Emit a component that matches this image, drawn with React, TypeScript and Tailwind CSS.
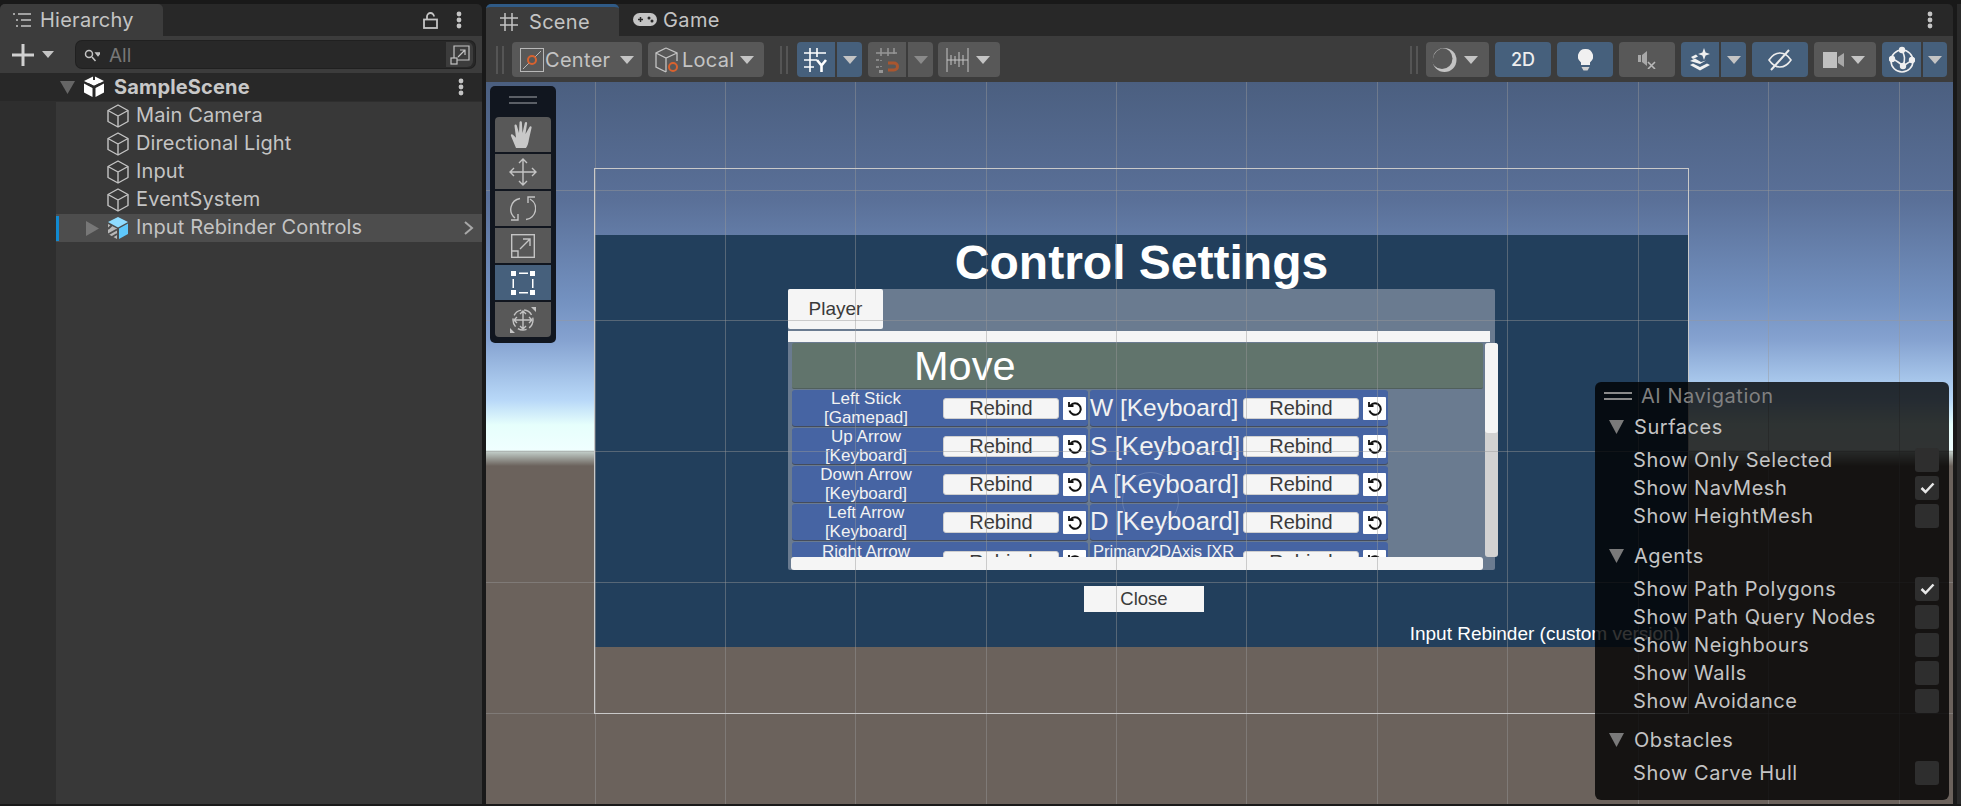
import React from "react";

const FONT = "font-['Inter','Noto_Sans',sans-serif]";
const GAME_FONT = "font-['Liberation_Sans',Arial,sans-serif]";

const hierarchy = ["Main Camera", "Directional Light", "Input", "EventSystem"];

const bindings = [
  { left: ["Left Stick", "[Gamepad]"], right: "W [Keyboard]", size: "text-[24.5px]" },
  { left: ["Up Arrow", "[Keyboard]"], right: "S [Keyboard]", size: "text-[26px]" },
  { left: ["Down Arrow", "[Keyboard]"], right: "A [Keyboard]", size: "text-[26px]" },
  { left: ["Left Arrow", "[Keyboard]"], right: "D [Keyboard]", size: "text-[25.7px]" },
];

// scene grid, in page pixels
const gridX = [595, 725, 855, 986, 1116, 1246, 1377, 1507, 1638, 1768, 1899];
const gridY = [190, 320, 451, 582, 713];

function Caret({ className = "", w = 14, h = 8 }: { className?: string; w?: number; h?: number }) {
  return (
    <svg width={w} height={h} viewBox="0 0 14 9" preserveAspectRatio="none" className={`shrink-0 ${className}`}>
      <path d="M0 0h14L7 9z" fill="currentColor" />
    </svg>
  );
}

function Kebab() {
  return (
    <svg width="6" height="18" viewBox="0 0 6 18" className="text-[#c4c4c4]">
      <circle cx="3" cy="3" r="2.4" fill="currentColor" />
      <circle cx="3" cy="9" r="2.4" fill="currentColor" />
      <circle cx="3" cy="15" r="2.4" fill="currentColor" />
    </svg>
  );
}

function Cube() {
  return (
    <svg width="22" height="24" viewBox="0 0 22 24" fill="none" stroke="#c4c4c4" strokeWidth="1.4" strokeLinejoin="round">
      <path d="M11 1 21 6.5V17.5L11 23 1 17.5V6.5Z" />
      <path d="M1 6.5 11 12 21 6.5M11 12V23" />
    </svg>
  );
}

function SceneIcon() {
  return (
    <svg width="22" height="24" viewBox="0 0 22 24">
      <path d="M11 1 21 6 11 11 1 6Z" fill="#fff" />
      <path d="M1 8.5 9.5 13V22L1 17.5ZM21 8.5 12.5 13V22L21 17.5Z" fill="#fff" />
      <path d="M11 0v5M5 9l6 3 6-3" stroke="#2c2c2c" strokeWidth="2" fill="none" />
    </svg>
  );
}

function PrefabIcon() {
  return (
    <svg width="22" height="24" viewBox="0 0 22 24">
      <path d="M11 1 21 6 11 11.5 1 6Z" fill="#8fdcff" />
      <path d="M12 12.5 21 7.5V18L12 23Z" fill="#5fc8fb" />
      <path d="M1 8 10 12.5V23L1 18Z" fill="#b8b8b8" />
      <path d="M1 13 5 9M1 18.5 10 13.5M5 21 10 18" stroke="#4d4d4d" strokeWidth="2" />
    </svg>
  );
}

function ToolbarButton({ children, active = false, className = "" }: { children: React.ReactNode; active?: boolean; className?: string }) {
  return (
    <div className={`flex h-[35px] items-center rounded-[4px] ${active ? "bg-[#46607c]" : "bg-[#585858]"} ${className}`}>
      {children}
    </div>
  );
}

function Split({ children, width = 38, menu = 25, active = false, dim = false }: { children: React.ReactNode; width?: number; menu?: number; active?: boolean; dim?: boolean }) {
  return (
    <div className={`flex h-[35px] gap-[2px] ${dim ? "text-[#8a8a8a]" : "text-[#c4c4c4]"}`}>
      <div
        className={`flex items-center justify-center rounded-l-[4px] ${active ? "bg-[#46607c]" : "bg-[#585858]"}`}
        style={{ width }}
      >
        {children}
      </div>
      <div
        className={`flex items-center justify-center rounded-r-[4px] ${active ? "bg-[#46607c]" : "bg-[#585858]"}`}
        style={{ width: menu }}
      >
        <Caret />
      </div>
    </div>
  );
}

function Grip() {
  return (
    <div className="flex h-[28px] gap-[4px]">
      <div className="w-[2px] bg-[#555]" />
      <div className="w-[2px] bg-[#555]" />
    </div>
  );
}

function TopToolbar() {
  return (
    <div className="flex h-[46px] shrink-0 items-center bg-[#3c3c3c] pb-[5px] pt-[6px]">
      <div className="ml-[10px]"><Grip /></div>
      <ToolbarButton className="ml-[8px] w-[130px] pl-[8px] text-[#c4c4c4]">
        <svg width="24" height="24" viewBox="0 0 24 24" fill="none">
          <rect x="0.5" y="0.5" width="23" height="23" stroke="#b8b8b8" />
          <path d="M3 21 21 3" stroke="#b8b8b8" />
          <circle cx="12" cy="12" r="4" stroke="#d8622f" strokeWidth="2" fill="#585858" />
        </svg>
        <span className="ml-[1px] text-[20px] tracking-[0.3px]">Center</span>
        <Caret className="ml-[10px]" />
      </ToolbarButton>
      <ToolbarButton className="ml-[6px] w-[116px] pl-[7px] text-[#c4c4c4]">
        <svg width="24" height="26" viewBox="0 0 24 26" fill="none" stroke="#c4c4c4" strokeWidth="1.3">
          <path d="M11 1 22 6V14M11 1 1 6V20L11 25M1 6 11 11 22 6M11 11V25" />
          <circle cx="18" cy="20" r="4" stroke="#d8622f" strokeWidth="2" />
        </svg>
        <span className="ml-[3px] text-[20px] tracking-[0.25px]">Local</span>
        <Caret className="ml-[6px]" />
      </ToolbarButton>
      <div className="ml-[16px]"><Grip /></div>
      <div className="ml-[9px]">
        <Split active>
          <svg width="24" height="26" viewBox="0 0 24 26" fill="none" stroke="#fff" strokeWidth="1.6">
            <path d="M6 1v24M13 1v9M0 6h22M0 13h13M0 20h10" />
            <path d="M13 13l4.5 5.5 4.500-5.500M17.5 18v7" strokeWidth="2.6" />
          </svg>
        </Split>
      </div>
      <div className="ml-[6px]">
        <Split dim>
          <svg width="24" height="26" viewBox="0 0 24 26" fill="none" stroke="#969696" strokeWidth="1.5">
            <path d="M6 1v8M13 1v8M19 1v6M1 6h21M6 13v1M1 13h3M6 19v1M1 20h3" />
            <rect x="4" y="23" width="4" height="3" fill="#969696" stroke="none" />
            <path d="M13 16h6a3.5 3.5 0 0 1 0 7h-6" stroke="#a9562f" strokeWidth="3" />
          </svg>
        </Split>
      </div>
      <ToolbarButton className="ml-[5px] w-[62px] pl-[8px] text-[#c4c4c4]">
        <svg width="23" height="26" viewBox="0 0 23 26" fill="none" stroke="#c4c4c4" strokeWidth="1">
          <path d="M1 1v24M22 1v24M1 13h21M5 8v10M9 9v8M13 5v15M17 8v10" />
        </svg>
        <Caret className="ml-[7px]" />
      </ToolbarButton>

      <div className="ml-auto mr-[6px] flex items-center">
        <Grip />
        <ToolbarButton className="ml-[8px] w-[63px] pl-[6px] text-[#c4c4c4]">
          <svg width="25" height="26" viewBox="0 0 25 26">
            <circle cx="12.5" cy="13" r="12" fill="#c4c4c4" />
            <circle cx="10" cy="11.5" r="10.5" fill="#585858" />
            <path d="M12.5 1A12 12 0 0 0 1 12 11 11 0 0 1 12.5 1Z" fill="#c4c4c4" />
          </svg>
          <Caret className="ml-[7px]" />
        </ToolbarButton>
        <ToolbarButton active className="ml-[6px] w-[56px] justify-center text-[18px] font-medium text-[#eee]">2D</ToolbarButton>
        <ToolbarButton active className="ml-[6px] w-[56px] justify-center">
          <svg width="15" height="22" viewBox="0 0 15 22">
            <path d="M7.5 0a7.4 7.4 0 0 1 4.5 13.4V16H3v-2.600A7.4 7.4 0 0 1 7.5 0Z" fill="#f0f0f0" />
            <path d="M3.5 18h8l-2 3.5h-4Z" fill="#d0d0d0" />
          </svg>
        </ToolbarButton>
        <ToolbarButton className="ml-[6px] w-[56px] justify-center">
          <svg width="20" height="18" viewBox="0 0 20 18" fill="none">
            <path d="M1 4h3v7H1ZM5 4l5-4v15l-5-4Z" fill="#a8a8a8" />
            <path d="M11 11l7 7M18 11l-7 7" stroke="#b8b8b8" strokeWidth="1.6" />
          </svg>
        </ToolbarButton>
        <div className="ml-[6px]">
          <Split active>
            <svg width="22" height="24" viewBox="0 0 22 24" fill="#f0f0f0">
              <path d="M15 0l1.6 4.4L21 6l-4.4 1.6L15 12l-1.6-4.400L9 6l4.4-1.600Z" />
              <path d="M2 9l5-2.500 2 2-5 2.500Z" />
              <path d="M1 13l5-2.500 6 3.500 5-1.500-6 3.500Z" />
              <path d="M1 17l3-1.500 7 3.500 7-3.500 3 1.500-10 5.500Z" />
            </svg>
          </Split>
        </div>
        <ToolbarButton active className="ml-[6px] w-[56px] justify-center">
          <svg width="24" height="22" viewBox="0 0 24 22" fill="none" stroke="#ececec" strokeWidth="1.6">
            <path d="M1 11c4-6 7-7 11-7s7 1 11 7c-4 6-7 7-11 7s-7-1-11-7Z" />
            <path d="M3 21 21 1" strokeWidth="2" />
          </svg>
        </ToolbarButton>
        <ToolbarButton className="ml-[6px] w-[62px] pl-[9px] text-[#c4c4c4]">
          <svg width="21" height="16" viewBox="0 0 21 16">
            <rect width="14" height="16" fill="#c0c0c0" />
            <path d="M15 5l6-4v14l-6-4Z" fill="#a8a8a8" />
          </svg>
          <Caret className="ml-[7px]" />
        </ToolbarButton>
        <div className="ml-[6px]">
          <Split width={39} menu={24} active>
            <svg width="26" height="28" viewBox="0 0 26 28" fill="none" stroke="#f0f0f0" strokeWidth="1.6">
              <circle cx="13" cy="15" r="11" />
              <path d="M3 12c5 4 9 5 10 8M13 4c2 5 4 8 1 16M14 20c4-2 7-5 10-6" />
              <circle cx="13" cy="4" r="2.4" fill="#f0f0f0" />
              <circle cx="3" cy="13" r="2.4" fill="#f0f0f0" />
              <circle cx="14" cy="20" r="2.4" fill="#f0f0f0" />
              <circle cx="23" cy="14" r="2.4" fill="#f0f0f0" />
            </svg>
          </Split>
        </div>
      </div>
    </div>
  );
}

function Tools() {
  const stroke = { fill: "none", stroke: "#c4c4c4", strokeWidth: 1.4 };
  const icons = [
    <svg key="hand" width="26" height="28" viewBox="0 0 26 28" fill="#c8c8c8">
      <path d="M6 27 1 15c-.6-1.4 1-2.4 2-1.2l3 3L4.5 5c-.2-1.6 2-1.9 2.3-.4L9 12l.5-10.500c.1-1.600 2.300-1.600 2.400 0L12.500 12l2.300-10c.4-1.500 2.500-1.100 2.300.4L15.500 13l4-7c.8-1.300 2.600-.4 2 1L19 18c-.5 4-1.500 7-3 9Z" />
    </svg>,
    <svg key="move" width="28" height="28" viewBox="0 0 28 28" {...stroke}>
      <path d="M14 1v26M1 14h26M10 5l4-4 4 4M10 23l4 4 4-4M5 10l-4 4 4 4M23 10l4 4-4 4" />
    </svg>,
    <svg key="rotate" width="26" height="26" viewBox="0 0 26 26" {...stroke}>
      <path d="M10 2.5A11 11 0 0 0 5 22M16 23.5A11 11 0 0 0 20 3M1 24h7v-6M25 1h-7v6" />
    </svg>,
    <svg key="scale" width="24" height="24" viewBox="0 0 24 24" {...stroke}>
      <rect x="0.7" y="0.7" width="22.6" height="22.6" />
      <path d="M1 17h6v6M9 15 19 5M12 5h7v7" />
    </svg>,
    <svg key="rect" width="24" height="24" viewBox="0 0 24 24" fill="#fff">
      <rect width="5" height="5" />
      <rect x="19" width="5" height="5" />
      <rect y="19" width="5" height="5" />
      <rect x="19" y="19" width="5" height="5" />
      <rect x="8" y="1.5" width="9" height="1.5" />
      <rect x="8" y="21" width="9" height="1.5" />
      <rect x="1.5" y="8" width="1.5" height="9" />
      <rect x="21" y="8" width="1.5" height="9" />
    </svg>,
    <svg key="transform" width="28" height="28" viewBox="0 0 28 28" {...stroke}>
      <circle cx="14" cy="14" r="10" strokeDasharray="9 3" />
      <path d="M14 5v18M5 14h18M11 8l3-3 3 3M11 20l3 3 3-3M8 11l-3 3 3 3M20 11l3 3-3 3" />
      <path d="M22 1h5v5ZM1 27v-5l5 5Z" fill="#c4c4c4" stroke="none" />
    </svg>,
  ];
  return (
    <div className="absolute left-[4px] top-[4px] flex w-[66px] flex-col gap-[2px] rounded-[5px] bg-[#11161f] px-[5px] pb-[6px] pt-[10px]">
      <div className="mb-[11px] flex flex-col items-center gap-[4px]">
        <div className="h-[2px] w-[28px] bg-[#5b5f66]" />
        <div className="h-[2px] w-[28px] bg-[#5b5f66]" />
      </div>
      {icons.map((icon, i) => (
        <div
          key={i}
          className={`flex h-[35px] items-center justify-center ${i === 4 ? "bg-[#46607c]" : "bg-[#585858]"} ${i === 0 ? "rounded-t-[4px]" : ""} ${i === 5 ? "rounded-b-[4px]" : ""}`}
        >
          {icon}
        </div>
      ))}
    </div>
  );
}

function ResetIcon() {
  return (
    <div className="flex h-[23px] w-[23px] shrink-0 items-center justify-center rounded-[1px] bg-white">
      <svg width="15" height="15" viewBox="0 0 15 15" fill="none" stroke="#111" strokeWidth="2">
        <path d="M3.5 4.5A5.7 5.7 0 1 1 2.5 9.5" />
        <path d="M2 1v4h4.5" strokeWidth="1.8" />
      </svg>
    </div>
  );
}

function RebindButton() {
  return (
    <div className="flex h-[21px] w-[116px] shrink-0 items-center justify-center rounded-[3px] border border-[#cfcfcf] bg-[#f5f5f5] text-[20px] text-[#3a3a3a]">
      Rebind
    </div>
  );
}

function BindingRow({ left, right, size }: { left: string[]; right: string; size: string }) {
  return (
    <div className="mb-[2px] flex h-[36px] shrink-0 gap-[2px]">
      <div className="flex h-[36px] w-[296px] items-center rounded-[3px] bg-[#4664a3] shadow-[0_1px_0_#444c5c]">
        <div className="mr-[3px] flex w-[148px] shrink-0 flex-col items-center text-[17px] leading-[19px] text-[#f2f2f2]">
          <span>{left[0]}</span>
          <span>{left[1]}</span>
        </div>
        <RebindButton />
        <div className="ml-[4px]"><ResetIcon /></div>
      </div>
      <div className="flex h-[36px] w-[298px] items-center rounded-[3px] bg-[#4664a3] shadow-[0_1px_0_#444c5c]">
        <span className={`w-[153px] shrink-0 whitespace-nowrap leading-none text-[#f2f2f2] ${size}`}>{right}</span>
        <RebindButton />
        <div className="ml-[4px]"><ResetIcon /></div>
      </div>
    </div>
  );
}

function SettingsCanvas() {
  return (
    <div className={`absolute left-[109px] top-[153px] flex h-[412px] w-[1093px] flex-col items-center bg-[#223f5c] ${GAME_FONT}`}>
      <h1 className="text-[48px] font-bold leading-[55px] text-white">Control Settings</h1>
      <div className="relative mt-[-1px] flex h-[281px] w-[707px] flex-col rounded-[2px] bg-[#6a7b90]">
        <div className="flex h-[40px] w-[95px] shrink-0 items-center justify-center rounded-[2px] bg-[#f5f5f5] text-[19px] text-[#3a3a3a]">
          Player
        </div>
        <div className="mt-[2px] h-[11px] w-[702px] shrink-0 bg-[#f5f5f5]" />
        <div className="ml-[4px] mt-[1px] flex h-[214px] w-[691px] shrink-0 flex-col overflow-hidden">
          <div className="mb-[1px] flex h-[46px] shrink-0 items-center rounded-[2px] border-b border-[#505f5c] bg-[#61746c] pl-[122px] text-[41.5px] leading-none text-white">
            Move
          </div>
          {bindings.map((b) => (
            <BindingRow key={b.right} left={b.left} right={b.right} size={b.size} />
          ))}
          <div className="flex h-[36px] shrink-0 gap-[2px]">
            <div className="flex h-[36px] w-[296px] items-start rounded-[3px] bg-[#4664a3]">
              <div className="mr-[3px] flex w-[148px] shrink-0 flex-col items-center text-[17px] leading-[19px] text-[#f2f2f2]">
                <span>Right Arrow</span>
              </div>
              <div className="mt-[9px]"><RebindButton /></div>
              <div className="ml-[4px] mt-[8px]"><ResetIcon /></div>
            </div>
            <div className="flex h-[36px] w-[298px] items-start rounded-[3px] bg-[#4664a3]">
              <span className="w-[153px] shrink-0 whitespace-nowrap pl-[3px] text-[16.5px] leading-[19px] text-[#f2f2f2]">Primary2DAxis [XR</span>
              <div className="mt-[9px]"><RebindButton /></div>
              <div className="ml-[4px] mt-[8px]"><ResetIcon /></div>
            </div>
          </div>
        </div>
        <div className="ml-[3px] h-[13px] w-[692px] shrink-0 rounded-[3px] bg-[#f5f5f5]" />
        <div className="absolute left-[697px] top-[54px] flex h-[214px] w-[13px] flex-col rounded-[3px] bg-[#d2d2d2]">
          <div className="h-[90px] rounded-[3px] bg-[#f5f5f5]" />
        </div>
      </div>
      <div className="ml-[5px] mt-[16px] flex h-[26px] w-[120px] items-center justify-center bg-[#f5f5f5] text-[18.5px] text-[#3a3a3a]">
        Close
      </div>
      <div className="absolute right-[8px] top-[388px] whitespace-nowrap text-[19px] leading-[22px] text-white">Input Rebinder (custom version)</div>
    </div>
  );
}

function NavRow({ label, checked = false }: { label: string; checked?: boolean }) {
  return (
    <div className="flex h-[28px] items-center justify-between pl-[38px] pr-[10px]">
      <span className="text-[20px] tracking-[0.55px] text-[#c4c4c4]">{label}</span>
      <div className="flex h-[24px] w-[24px] items-center justify-center rounded-[3px] bg-[#2e2e2e]">
        {checked && (
          <svg width="15" height="12" viewBox="0 0 15 12" fill="none" stroke="#e8e8e8" strokeWidth="2.5">
            <path d="M1.5 6 5.5 10 13.5 1.5" />
          </svg>
        )}
      </div>
    </div>
  );
}

function NavHeader({ label }: { label: string }) {
  return (
    <div className="flex h-[28px] items-center gap-[10px] pl-[14px]">
      <Caret className="text-[#7a7a7a]" w={15} h={14} />
      <span className="text-[20px] tracking-[0.55px] text-[#c4c4c4]">{label}</span>
    </div>
  );
}

function AINavigation() {
  return (
    <div className={`absolute left-[1109px] top-[300px] flex h-[418px] w-[354px] flex-col rounded-[6px] bg-black/80 ${FONT}`}>
      <div className="flex h-[28px] shrink-0 items-center gap-[9px] pl-[9px]">
        <div className="flex flex-col gap-[4.5px]">
          <div className="h-[1.5px] w-[28px] bg-[#8a8a8a]" />
          <div className="h-[1.5px] w-[28px] bg-[#8a8a8a]" />
        </div>
        <span className="text-[20px] tracking-[0.55px] text-[#808080]">AI Navigation</span>
      </div>
      <div className="mt-[3px]"><NavHeader label="Surfaces" /></div>
      <div className="mt-[5px]">
        <NavRow label="Show Only Selected" />
        <NavRow label="Show NavMesh" checked />
        <NavRow label="Show HeightMesh" />
      </div>
      <div className="mt-[12px]"><NavHeader label="Agents" /></div>
      <div className="mt-[5px]">
        <NavRow label="Show Path Polygons" checked />
        <NavRow label="Show Path Query Nodes" />
        <NavRow label="Show Neighbours" />
        <NavRow label="Show Walls" />
        <NavRow label="Show Avoidance" />
      </div>
      <div className="mt-[11px]"><NavHeader label="Obstacles" /></div>
      <div className="mt-[5px]">
        <NavRow label="Show Carve Hull" />
      </div>
    </div>
  );
}

function SceneView() {
  return (
    <div className="relative flex-1 overflow-hidden bg-[linear-gradient(180deg,#4b5f80_0px,#5a7098_118px,#7391c0_218px,#85a2d0_258px,#b8d8f8_318px,#e6fffc_343px,#f0ffff_368px,#c5d2cd_369px,#6b625c_384px,#6b625c_100%)]">
      <SettingsCanvas />
      {gridX.map((x) => (
        <div key={x} className="absolute bottom-0 top-0 w-px bg-[#9a9a9a]/45" style={{ left: x - 486 }} />
      ))}
      {gridY.map((y) => (
        <div key={y} className="absolute left-0 right-0 h-px bg-[#9a9a9a]/45" style={{ top: y - 82 }} />
      ))}
      <div className="absolute left-[636px] top-[390px] h-[57px] w-[57px] rounded-full border border-white/15" />
      <div className="absolute left-[108px] top-[86px] h-[546px] w-[1095px] border border-[#c9c9c9]" />
      <Tools />
      <AINavigation />
    </div>
  );
}

export default function App() {
  return (
    <div className={`flex h-[806px] w-[1961px] overflow-hidden bg-[#191919] pb-[2px] pt-[4px] ${FONT}`}>
      <div className="flex h-full w-[482px] shrink-0 flex-col rounded-t-[5px] bg-[#282828]">
        <div className="flex h-[32px] shrink-0 items-center justify-between">
          <div className="flex h-full w-[163px] items-center gap-[9px] rounded-t-[5px] bg-[#3c3c3c] pl-[13px]">
            <svg width="18" height="14" viewBox="0 0 18 14" stroke="#c4c4c4" strokeWidth="1.5" fill="none">
              <path d="M0 1h2M5 1h13M3 7h2M8 7h10M3 13h2M8 13h10" />
            </svg>
            <span className="text-[20px] tracking-[0.25px] text-[#c4c4c4]">Hierarchy</span>
          </div>
          <div className="flex items-center gap-[18px] pr-[20px]">
            <svg width="15" height="17" viewBox="0 0 15 17" fill="none" stroke="#c4c4c4" strokeWidth="1.8">
              <rect x="1" y="7.5" width="13" height="8.5" />
              <path d="M4 7.5V4.5a3.5 3.5 0 0 1 7 0" />
            </svg>
            <Kebab />
          </div>
        </div>
        <div className="flex h-[37px] shrink-0 items-center bg-[#3c3c3c]">
          <svg width="22" height="22" viewBox="0 0 22 22" className="ml-[12px]" stroke="#d0d0d0" strokeWidth="3">
            <path d="M11 0v22M0 11h22" />
          </svg>
          <Caret className="ml-[8px] text-[#c4c4c4]" w={12} h={7} />
          <div className="ml-[22px] flex h-[27px] w-[399px] items-center rounded-[6px] bg-[#282828] pl-[8px] ring-1 ring-[#202020]">
            <svg width="16" height="14" viewBox="0 0 16 14" fill="none" stroke="#c4c4c4" strokeWidth="1.5" className="mt-[2px]">
              <circle cx="5" cy="5" r="3.5" />
              <path d="M8 8l3.5 4M12 4h4l-2 2.5z" />
            </svg>
            <span className="ml-[9px] mt-[3px] text-[19px] leading-[24px] text-[#777]">All</span>
            <div className="ml-auto mr-[2px] flex h-[25px] w-[27px] items-center justify-center rounded-r-[6px] bg-[#3c3c3c]">
              <svg width="20" height="20" viewBox="0 0 20 20" fill="none" stroke="#c4c4c4" strokeWidth="1.2">
                <path d="M4 13V1h15v14H7" />
                <rect x="1" y="13" width="6" height="6" />
                <path d="M8 12l7-7M10 5h5v5" />
              </svg>
            </div>
          </div>
        </div>
        <div className="flex h-[29px] shrink-0 items-center border-b border-[#2e2e2e] bg-[#282828]">
          <Caret className="ml-[60px] text-[#666]" w={15} h={13} />
          <div className="ml-[8px]"><SceneIcon /></div>
          <span className="ml-[9px] text-[20px] font-bold tracking-[0.15px] text-[#c8c8c8]">SampleScene</span>
          <div className="ml-auto mr-[18px]"><Kebab /></div>
        </div>
        <div className="flex flex-1 bg-[#383838]">
          <div className="w-[56px] shrink-0 bg-[#2e2e2e]" />
          <div className="flex-1">
            {hierarchy.map((name) => (
              <div key={name} className="flex h-[28px] items-center pl-[51px]">
                <Cube />
                <span className="mb-[2px] ml-[7px] text-[20px] tracking-[0.13px] text-[#c4c4c4]">{name}</span>
              </div>
            ))}
            <div className="flex h-[28px] items-center bg-[#4d4d4d]">
              <div className="h-[25px] w-[3px] bg-[#1189d0]" />
              <svg width="13" height="15" viewBox="0 0 14 16" className="ml-[27px]">
                <path d="M0 0l14 8-14 8z" fill="#777" />
              </svg>
              <div className="ml-[8px]"><PrefabIcon /></div>
              <span className="mb-[2px] ml-[7px] text-[20px] tracking-[0.13px] text-[#c4c4c4]">Input Rebinder Controls</span>
              <svg width="10" height="14" viewBox="0 0 10 14" className="ml-auto mr-[8px]" fill="none" stroke="#a8a8a8" strokeWidth="2">
                <path d="M1 1l7 6-7 6" />
              </svg>
            </div>
          </div>
        </div>
      </div>

      <div className="ml-[4px] flex h-full w-[1467px] shrink-0 flex-col rounded-t-[5px] bg-[#282828]">
        <div className="flex h-[32px] shrink-0 items-center">
          <div className="flex h-full w-[133px] items-center gap-[11px] rounded-t-[5px] border-t-[3px] border-[#2f5a86] bg-[#3c3c3c] pl-[14px]">
            <svg width="18" height="18" viewBox="0 0 18 18" stroke="#c4c4c4" strokeWidth="1.5">
              <path d="M5 0v18M12 0v18M0 5h18M0 12h18" />
            </svg>
            <span className="text-[20px] tracking-[0.3px] text-[#c4c4c4]">Scene</span>
          </div>
          <svg width="24" height="14" viewBox="0 0 24 14" className="ml-[14px]" fill="#c4c4c4">
            <rect width="24" height="13" rx="6.5" />
            <path d="M5 6.5h5M7.5 4v5" stroke="#282828" strokeWidth="1.5" />
            <circle cx="16" cy="5" r="1.5" fill="#282828" />
            <circle cx="19" cy="8" r="1.5" fill="#282828" />
          </svg>
          <span className="ml-[6px] text-[20px] tracking-[0.4px] text-[#c4c4c4]">Game</span>
          <div className="ml-auto mr-[20px]"><Kebab /></div>
        </div>
        <TopToolbar />
        <SceneView />
      </div>
      <div className="ml-[4px] w-[4px] shrink-0 bg-[#2a2a2a]" />
    </div>
  );
}
